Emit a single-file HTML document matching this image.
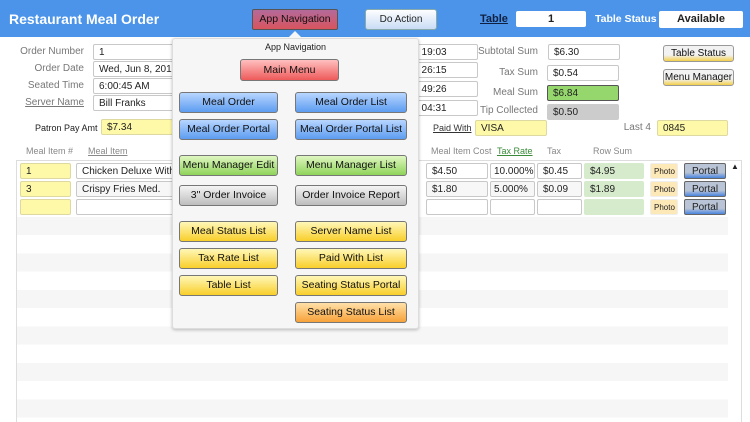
<!DOCTYPE html><html><head><style>
*{box-sizing:border-box;margin:0;padding:0}
body{width:750px;height:422px;overflow:hidden;background:#fff;font-family:"Liberation Sans",sans-serif;position:relative;font-size:10px;color:#222}
.a{position:absolute;white-space:nowrap}
.hdr{left:0;top:0;width:750px;height:37px;background:#4b94ea}
.f{position:absolute;height:16px;border:1px solid #c8c8c8;border-radius:2px;background:#fff;font-size:10px;padding:1px 5px;line-height:13px;white-space:nowrap;overflow:hidden}
.y{background:#fef9a8;border-color:#ddd9a0}
.lb{position:absolute;font-size:10px;color:#777;text-align:right;line-height:14px;white-space:nowrap}
.u{text-decoration:underline}
.b{position:absolute;height:21px;border:1px solid #777;border-radius:3px;font-size:10.5px;text-align:center;line-height:19px;color:#111;white-space:nowrap}
.bl{background:linear-gradient(#b8d6ff,#5d9cf0)}
.gr{background:linear-gradient(#dff7c0,#8fd35b)}
.gy{background:linear-gradient(#f4f4f4,#bdbdbd)}
.yl{background:linear-gradient(#fff7b8,#f9cf2a)}
.or{background:linear-gradient(#ffe0a8,#f7a23a)}
.c{position:absolute;font-size:9px;color:#888;white-space:nowrap}
</style></head><body>
<div class="a hdr"></div>
<div class="a" style="left:9px;top:11px;font-size:14px;font-weight:bold;color:#fff">Restaurant Meal Order</div>
<div class="a" style="left:252px;top:9px;width:86px;height:21px;background:linear-gradient(#b36a9b,#d9545e);border:1px solid #555;border-radius:2px;font-size:10.5px;text-align:center;line-height:19px;color:#111">App Navigation</div>
<div class="a" style="left:365px;top:9px;width:72px;height:21px;background:linear-gradient(#fdfeff,#c9dcf5);border:1px solid #8aa;border-radius:3px;font-size:10px;text-align:center;line-height:19px">Do Action</div>
<div class="a u" style="left:480px;top:13px;font-size:11px;font-weight:bold;color:#102040">Table</div>
<div class="a" style="left:516px;top:11px;width:70px;height:16px;background:#fff;border-radius:2px;font-size:11px;font-weight:bold;text-align:center;line-height:16px">1</div>
<div class="a" style="left:595px;top:13px;font-size:10.5px;font-weight:bold;color:#fff">Table Status</div>
<div class="a" style="left:659px;top:11px;width:84px;height:17px;background:#fff;border-radius:2px;font-size:11px;font-weight:bold;text-align:center;line-height:17px">Available</div>

<div class="lb" style="left:0;width:84px;top:45px">Order Number</div>
<div class="lb" style="left:0;width:84px;top:62px">Order Date</div>
<div class="lb" style="left:0;width:84px;top:79px">Seated Time</div>
<div class="lb u" style="left:0;width:84px;top:96px">Server Name</div>
<div class="f" style="left:93px;top:44px;width:90px">1</div>
<div class="f" style="left:93px;top:61px;width:90px">Wed, Jun 8, 2016</div>
<div class="f" style="left:93px;top:78px;width:90px">6:00:45 AM</div>
<div class="f" style="left:93px;top:95px;width:90px">Bill Franks</div>
<div class="f" style="left:410px;top:44px;width:68px">&nbsp;&nbsp;19:03</div>
<div class="f" style="left:410px;top:62px;width:68px">&nbsp;&nbsp;26:15</div>
<div class="f" style="left:410px;top:81px;width:68px">&nbsp;&nbsp;49:26</div>
<div class="f" style="left:410px;top:100px;width:68px">&nbsp;&nbsp;04:31</div>
<div class="lb" style="left:470px;width:68px;top:45px">Subtotal Sum</div>
<div class="lb" style="left:470px;width:68px;top:66px">Tax Sum</div>
<div class="lb" style="left:470px;width:68px;top:86px">Meal Sum</div>
<div class="lb" style="left:470px;width:68px;top:104px">Tip Collected</div>
<div class="f" style="left:548px;top:44px;width:72px">$6.30</div>
<div class="f" style="left:547px;top:65px;width:72px">$0.54</div>
<div class="f" style="left:547px;top:85px;width:72px;background:#95d76d;border-color:#555">$6.84</div>
<div class="f" style="left:547px;top:104px;width:72px;background:#ccc;border-color:#ccc">$0.50</div>
<div class="b" style="left:663px;top:45px;width:71px;height:17px;line-height:15px;font-size:10px;background:linear-gradient(#f2f2f2 60%,#f3cf4a);border-color:#999">Table Status</div>
<div class="b" style="left:663px;top:69px;width:71px;height:17px;line-height:15px;font-size:10px;background:linear-gradient(#f2f2f2 60%,#f3cf4a);border-color:#999">Menu Manager</div>
<div class="a" style="left:35px;top:123px;font-size:9px">Patron Pay Amt</div>
<div class="f y" style="left:101px;top:119px;width:72px">$7.34</div>
<div class="a u" style="left:433px;top:123px;font-size:9px;color:#333">Paid With</div>
<div class="f y" style="left:475px;top:120px;width:72px">VISA</div>
<div class="lb" style="left:600px;width:51px;top:121px">Last 4</div>
<div class="f y" style="left:657px;top:120px;width:71px">0845</div>

<div class="c" style="left:26px;top:146px">Meal Item #</div>
<div class="c u" style="left:88px;top:146px">Meal Item</div>
<div class="c" style="left:431px;top:146px">Meal Item Cost</div>
<div class="c u" style="left:497px;top:146px;color:#3a8a3a">Tax Rate</div>
<div class="c" style="left:547px;top:146px">Tax</div>
<div class="c" style="left:593px;top:146px">Row Sum</div>

<div class="a" style="left:16px;top:160px;width:726px;height:262px;border:1px solid #ddd;border-bottom:none;background:#fff"></div>
<div class="a" style="left:17px;top:217px;width:711px;height:205px;background:repeating-linear-gradient(#f6f6f6 0 18px,#fff 18px 36.5px)"></div>
<div class="a" style="left:731px;top:162px;font-size:8px">▲</div>

<div class="f y" style="left:20px;top:163px;width:51px">1</div>
<div class="f y" style="left:20px;top:181px;width:51px">3</div>
<div class="f y" style="left:20px;top:199px;width:51px"></div>
<div class="f" style="left:76px;top:163px;width:100px">Chicken Deluxe With C</div>
<div class="f" style="left:76px;top:181px;width:100px;background:#f7f7f7">Crispy Fries Med.</div>
<div class="f" style="left:76px;top:199px;width:100px"></div>
<div class="f" style="left:426px;top:163px;width:62px">$4.50</div>
<div class="f" style="left:426px;top:181px;width:62px;background:#f7f7f7">$1.80</div>
<div class="f" style="left:426px;top:199px;width:62px"></div>
<div class="f" style="left:490px;top:163px;width:45px;padding:1px 3px">10.000%</div>
<div class="f" style="left:490px;top:181px;width:45px;background:#f7f7f7;padding:1px 3px">5.000%</div>
<div class="f" style="left:490px;top:199px;width:45px"></div>
<div class="f" style="left:537px;top:163px;width:45px">$0.45</div>
<div class="f" style="left:537px;top:181px;width:45px;background:#f7f7f7">$0.09</div>
<div class="f" style="left:537px;top:199px;width:45px"></div>
<div class="f" style="left:584px;top:163px;width:60px;background:#d6ebcc;border-color:#d6ebcc">$4.95</div>
<div class="f" style="left:584px;top:181px;width:60px;background:#d6ebcc;border-color:#d6ebcc">$1.89</div>
<div class="f" style="left:584px;top:199px;width:60px;background:#d6ebcc;border-color:#d6ebcc"></div>
<div class="f" style="left:650px;top:163px;width:28px;background:#fde8b8;border-color:#eee;font-size:8px;padding:1px 3px">Photo</div>
<div class="f" style="left:650px;top:181px;width:28px;background:#fde8b8;border-color:#eee;font-size:8px;padding:1px 3px">Photo</div>
<div class="f" style="left:650px;top:199px;width:28px;background:#fde8b8;border-color:#eee;font-size:8px;padding:1px 3px">Photo</div>
<div class="f" style="left:684px;top:163px;width:42px;background:linear-gradient(#b9c4d6 60%,#4b85e0);border-color:#666;text-align:center">Portal</div>
<div class="f" style="left:684px;top:181px;width:42px;background:linear-gradient(#b9c4d6 60%,#4b85e0);border-color:#666;text-align:center">Portal</div>
<div class="f" style="left:684px;top:199px;width:42px;background:linear-gradient(#b9c4d6 60%,#4b85e0);border-color:#666;text-align:center">Portal</div>

<div class="a" style="left:172px;top:38px;width:247px;height:291px;background:#f6f6f6;border:1px solid #ddd;border-radius:3px;box-shadow:0 1px 3px rgba(0,0,0,.25)"></div>
<div class="a" style="left:288px;top:31px;width:0;height:0;border-left:7px solid transparent;border-right:7px solid transparent;border-bottom:7px solid #f6f6f6"></div>
<div class="a" style="left:172px;top:42px;width:247px;text-align:center;font-size:9px">App Navigation</div>
<div class="b" style="left:240px;top:59px;width:99px;height:22px;line-height:20px;background:linear-gradient(#ffc0c0,#ee5a5a)">Main Menu</div>
<div class="b bl" style="left:179px;top:92px;width:99px">Meal Order</div>
<div class="b bl" style="left:295px;top:92px;width:112px">Meal Order List</div>
<div class="b bl" style="left:179px;top:119px;width:99px">Meal Order Portal</div>
<div class="b bl" style="left:295px;top:119px;width:112px">Meal Order Portal List</div>
<div class="b gr" style="left:179px;top:155px;width:99px">Menu Manager Edit</div>
<div class="b gr" style="left:295px;top:155px;width:112px">Menu Manager List</div>
<div class="b gy" style="left:179px;top:185px;width:99px">3" Order Invoice</div>
<div class="b gy" style="left:295px;top:185px;width:112px">Order Invoice Report</div>
<div class="b yl" style="left:179px;top:221px;width:99px">Meal Status List</div>
<div class="b yl" style="left:295px;top:221px;width:112px">Server Name List</div>
<div class="b yl" style="left:179px;top:248px;width:99px">Tax Rate List</div>
<div class="b yl" style="left:295px;top:248px;width:112px">Paid With List</div>
<div class="b yl" style="left:179px;top:275px;width:99px">Table List</div>
<div class="b yl" style="left:295px;top:275px;width:112px">Seating Status Portal</div>
<div class="b or" style="left:295px;top:302px;width:112px">Seating Status List</div>
</body></html>
